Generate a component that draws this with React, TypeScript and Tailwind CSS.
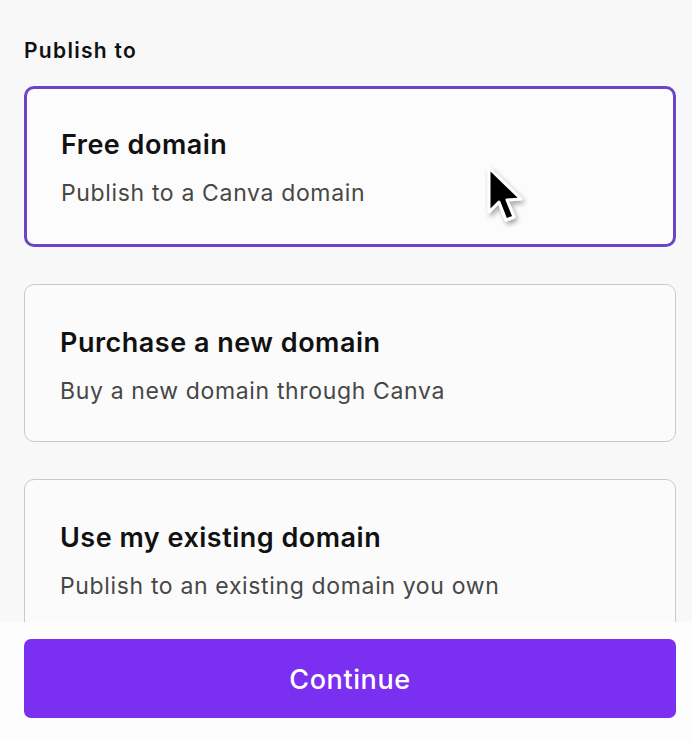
import React from "react";

function Card({ title, desc, selected }: { title: string; desc: string; selected?: boolean }) {
  return (
    <div
      className={
        selected
          ? "relative h-[161px] rounded-[10px] border-[3px] border-[#6b45c6] bg-[#fcfcfc] pl-[34px] pt-[39px]"
          : "relative h-[158px] rounded-[10px] border-[1.5px] border-[#c9c9c9] bg-[#fbfbfb] pl-[35px] pt-[41px]"
      }
    >
      <div className="text-[27px] font-semibold leading-[34px] tracking-[0.5px] text-[#111]">{title}</div>
      <div className="mt-[17px] text-[23px] leading-[28px] tracking-[0.65px] text-[#474747]">{desc}</div>
    </div>
  );
}

export default function App() {
  return (
    <div
      className="relative flex h-[742px] w-[692px] flex-col overflow-hidden bg-[#f8f8f8]"
      style={{ fontFamily: "Inter, 'Noto Sans', sans-serif" }}
    >
      <div className="flex flex-col pl-[24px] pr-[16px] pt-[37px]">
        <div className="text-[21px] font-semibold leading-[28px] tracking-[1.3px] text-[#111]">Publish to</div>
        <div className="mt-[21px] flex flex-col gap-[37px]">
          <div className="relative">
            <Card title="Free domain" desc="Publish to a Canva domain" selected />
            <svg
              className="absolute left-[460px] top-[77px]"
              width="50"
              height="70"
              viewBox="0 0 50 70"
            >
              <defs>
                <filter id="sh" x="-50%" y="-50%" width="200%" height="200%">
                  <feDropShadow dx="2" dy="3" stdDeviation="2.5" floodColor="#000" floodOpacity="0.35" />
                </filter>
              </defs>
              <path
                d="M5 5 L5 49 L15 39 L22 57 L30 54 L23 37 L37 36 Z"
                fill="#000"
                stroke="#fff"
                strokeWidth="3"
                strokeLinejoin="round"
                filter="url(#sh)"
              />
            </svg>
          </div>
          <Card title="Purchase a new domain" desc="Buy a new domain through Canva" />
          <Card title="Use my existing domain" desc="Publish to an existing domain you own" />
        </div>
      </div>
      <div className="absolute bottom-0 left-0 right-0 h-[120px] bg-[#fdfdfd] pl-[24px] pr-[16px] pt-[17px]">
        <button className="flex h-[79px] w-full items-center justify-center rounded-[7px] bg-[#7b2ff0] pt-[3px] text-[27px] font-medium tracking-[0.6px] text-white">
          Continue
        </button>
      </div>
    </div>
  );
}
